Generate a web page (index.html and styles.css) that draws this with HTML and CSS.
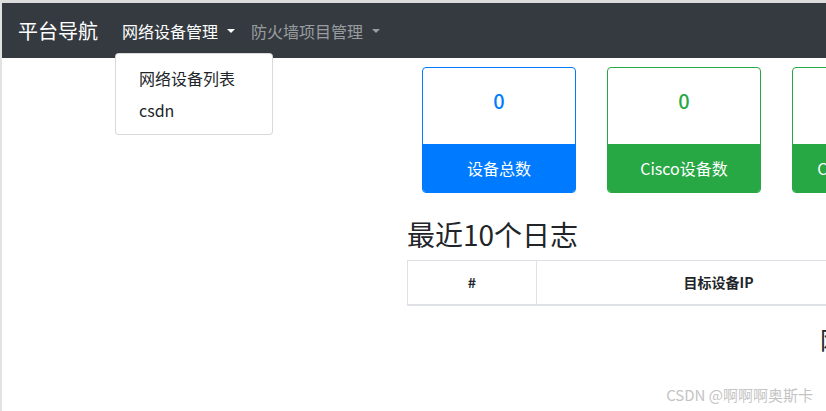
FILE: index.html
```html
<!DOCTYPE html>
<html lang="zh-CN">
<head>
  <meta charset="UTF-8">
  <meta name="viewport" content="width=device-width, initial-scale=1.0">
  <link rel="stylesheet" href="styles.css">
  <title>平台导航</title>
</head>
<body>
  <nav class="navbar">
    <a class="brand" href="#">平台导航</a>
    <ul class="nav">
      <li class="nav-item open">
        <a class="nav-link active" href="#">网络设备管理<span class="caret"></span></a>
        <div class="dropdown">
          <a class="dropdown-item" href="#">网络设备列表</a>
          <a class="dropdown-item" href="#">csdn</a>
        </div>
      </li>
      <li class="nav-item">
        <a class="nav-link" href="#">防火墙项目管理<span class="caret"></span></a>
      </li>
    </ul>
  </nav>

  <div class="main">
    <div class="sidebar"></div>
    <div class="content">
      <div class="cards">
        <div class="card blue">
          <div class="card-num">0</div>
          <div class="card-foot">设备总数</div>
        </div>
        <div class="card green">
          <div class="card-num">0</div>
          <div class="card-foot">Cisco设备数</div>
        </div>
        <div class="card green">
          <div class="card-num">0</div>
          <div class="card-foot">Cisco在线设备</div>
        </div>
      </div>

      <h3 class="title">最近10个日志</h3>
      <table class="log-table">
        <thead>
          <tr>
            <th class="col-id">#</th>
            <th class="col-ip">目标设备IP</th>
            <th class="col-rest">操作</th>
          </tr>
        </thead>
      </table>
      <p class="empty">网络设备日志</p>
    </div>
  </div>

  <div class="watermark">CSDN @啊啊啊奥斯卡</div>
</body>
</html>
```

FILE: styles.css
```css
html, body {
  height: 100%;
}

body {
  margin: 0;
  box-sizing: border-box;
  border-top: 3px solid #dcdcdc;
  border-left: 2px solid #e2e2e2;
  background-color: #fff;
  color: #212529;
  font-family: "Noto Sans CJK SC", "Noto Sans", sans-serif;
  overflow: hidden;
  position: relative;
}

a {
  text-decoration: none;
}

/* navbar */
.navbar {
  display: flex;
  align-items: stretch;
  height: 55px;
  padding: 0 16px;
  background-color: #343a40;
}

.brand {
  display: flex;
  align-items: center;
  margin-right: 16px;
  font-size: 20px;
  color: #fff;
}

.nav {
  display: flex;
  margin: 0;
  padding: 0;
  list-style: none;
}

.nav-item {
  position: relative;
  display: flex;
  align-items: center;
}

.nav-link {
  display: flex;
  align-items: center;
  padding: 0 8px;
  font-size: 16px;
  line-height: 24px;
  color: rgba(255, 255, 255, 0.5);
}

.nav-link.active {
  color: #fff;
}

.caret {
  display: inline-block;
  margin-left: 9px;
  border-top: 4px solid currentColor;
  border-left: 4px solid transparent;
  border-right: 4px solid transparent;
}

.dropdown {
  position: absolute;
  top: 50px;
  left: 1px;
  z-index: 10;
  width: 156px;
  padding: 8px 0;
  background-color: #fff;
  border: 1px solid rgba(0, 0, 0, 0.15);
  border-radius: 4px;
}

.dropdown-item {
  display: block;
  padding: 4px 23px;
  font-size: 16px;
  line-height: 24px;
  color: #212529;
}

/* main area */
.main {
  display: flex;
}

.sidebar {
  flex: 0 0 405px;
}

.content {
  flex: 0 0 900px;
}

.cards {
  display: flex;
  gap: 31px;
  margin-top: 9px;
  padding-left: 15px;
}

.card {
  width: 154px;
  height: 126px;
  box-sizing: border-box;
  display: flex;
  flex-direction: column;
  border: 1px solid;
  border-radius: 4px;
  overflow: hidden;
}

.card.blue {
  border-color: #007bff;
}

.card.green {
  border-color: #28a745;
}

.card-num {
  height: 76px;
  box-sizing: border-box;
  padding-top: 21px;
  text-align: center;
  font-size: 20px;
  line-height: 24px;
  font-weight: 500;
}

.blue .card-num {
  color: #007bff;
}

.green .card-num {
  color: #28a745;
}

.card-foot {
  flex: 1;
  display: flex;
  align-items: center;
  justify-content: center;
  font-size: 16px;
  white-space: nowrap;
  color: #fff;
}

.blue .card-foot {
  background-color: #007bff;
}

.green .card-foot {
  background-color: #28a745;
}

.title {
  margin: 25px 0 8px;
  font-size: 28px;
  font-weight: 400;
  line-height: 1.2;
}

.log-table {
  border-collapse: collapse;
}

.log-table th {
  height: 45px;
  padding: 0 12px;
  box-sizing: border-box;
  border: 1px solid #dee2e6;
  border-bottom: 2px solid #dee2e6;
  font-size: 14px;
  font-weight: bold;
  text-align: center;
}

.col-id {
  width: 129px;
}

.col-ip {
  width: 364px;
}

.col-rest {
  width: 300px;
}

.empty {
  margin: 19px 0 0 413px;
  font-size: 24px;
  line-height: 28px;
  white-space: nowrap;
}

.watermark {
  position: absolute;
  right: 13px;
  bottom: 6px;
  font-size: 15px;
  color: #c4c4c4;
}
```
